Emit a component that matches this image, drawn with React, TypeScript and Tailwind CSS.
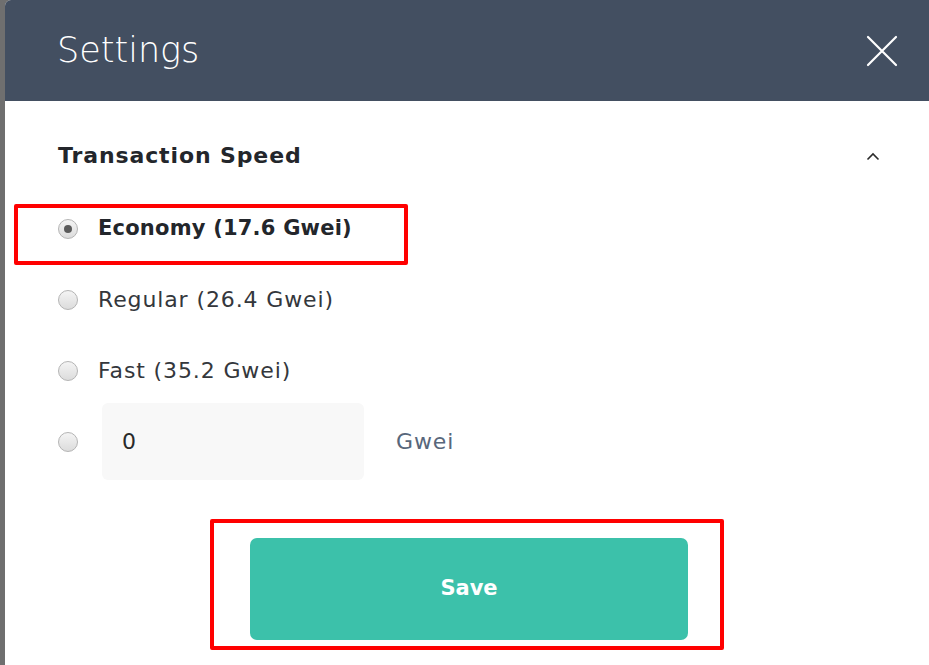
import * as React from 'react';

const font = { fontFamily: '"DejaVu Sans", "Noto Sans", sans-serif' };

const Radio: React.FC<{ checked?: boolean }> = ({ checked }) => (
  <span className="flex h-[20px] w-[20px] shrink-0 items-center justify-center rounded-full border border-[#b4b4b4] bg-gradient-to-b from-[#f4f4f4] to-[#dcdcdc]">
    {checked && <span className="h-[8px] w-[8px] rounded-full bg-[#5a5a5a]" />}
  </span>
);

const options = [
  { label: 'Economy (17.6 Gwei)', checked: true },
  { label: 'Regular (26.4 Gwei)', checked: false },
  { label: 'Fast (35.2 Gwei)', checked: false },
];

export default function App() {
  return (
    <div className="flex h-[665px] w-[929px] overflow-hidden bg-[#6f6f6f]" style={font}>
      <div className="ml-[5px] flex flex-1 flex-col overflow-hidden rounded-tl-[6px] bg-white">
        {/* Header */}
        <div className="flex h-[101px] shrink-0 items-center justify-between bg-[#434f61] pl-[52px] pr-[31px]">
          <h1 className="text-[35px] font-light leading-none text-white">Settings</h1>
          <svg width="32" height="32" viewBox="0 0 32 32" fill="none">
            <path d="M2 2L30 30M30 2L2 30" stroke="white" strokeWidth="2.2" strokeLinecap="round" />
          </svg>
        </div>

        <div className="flex flex-col pl-[53px] pr-[49px]">
          {/* Section heading */}
          <div className="flex h-[92px] items-center justify-between pt-[16px]">
            <h2 className="text-[22px] font-semibold tracking-[0.04em] text-[#23262b]">
              Transaction Speed
            </h2>
            <svg width="14" height="9" viewBox="0 0 14 9" fill="none" className="mt-[2px]">
              <path d="M1.5 7.5L7 2L12.5 7.5" stroke="#2b2b2b" strokeWidth="1.6" />
            </svg>
          </div>

          {/* Options */}
          <div className="flex flex-col">
            {options.map((o) => (
              <div key={o.label} className="relative flex h-[71px] items-center gap-[20px]">
                <Radio checked={o.checked} />
                <span
                  className={
                    o.checked
                      ? 'text-[21px] font-semibold tracking-[0.01em] text-[#23262b]'
                      : 'text-[22px] tracking-[0.04em] text-[#34373c]'
                  }
                >
                  {o.label}
                </span>
                {o.checked && (
                  <div className="pointer-events-none absolute left-[-44px] top-[11px] h-[61px] w-[394px] rounded-[2px] border-[4px] border-[#ff0000]" />
                )}
              </div>
            ))}
            <div className="flex h-[71px] items-center">
              <Radio />
              <div className="ml-[24px] flex h-[77px] w-[262px] items-center rounded-[6px] bg-[#f8f8f8] pl-[20px] text-[22px] text-[#2a2a2a]">
                0
              </div>
              <span className="ml-[32px] text-[22px] tracking-[0.04em] text-[#58677b]">Gwei</span>
            </div>
          </div>

          {/* Save */}
          <div className="relative mt-[61px] flex justify-center">
            <button className="h-[102px] w-[438px] rounded-[7px] bg-[#3cc1aa] text-[21px] font-semibold text-white">
              Save
            </button>
            <div className="pointer-events-none absolute left-[152px] top-[-19px] h-[131px] w-[514px] rounded-[2px] border-[4px] border-[#ff0000]" />
          </div>
        </div>
      </div>
    </div>
  );
}
